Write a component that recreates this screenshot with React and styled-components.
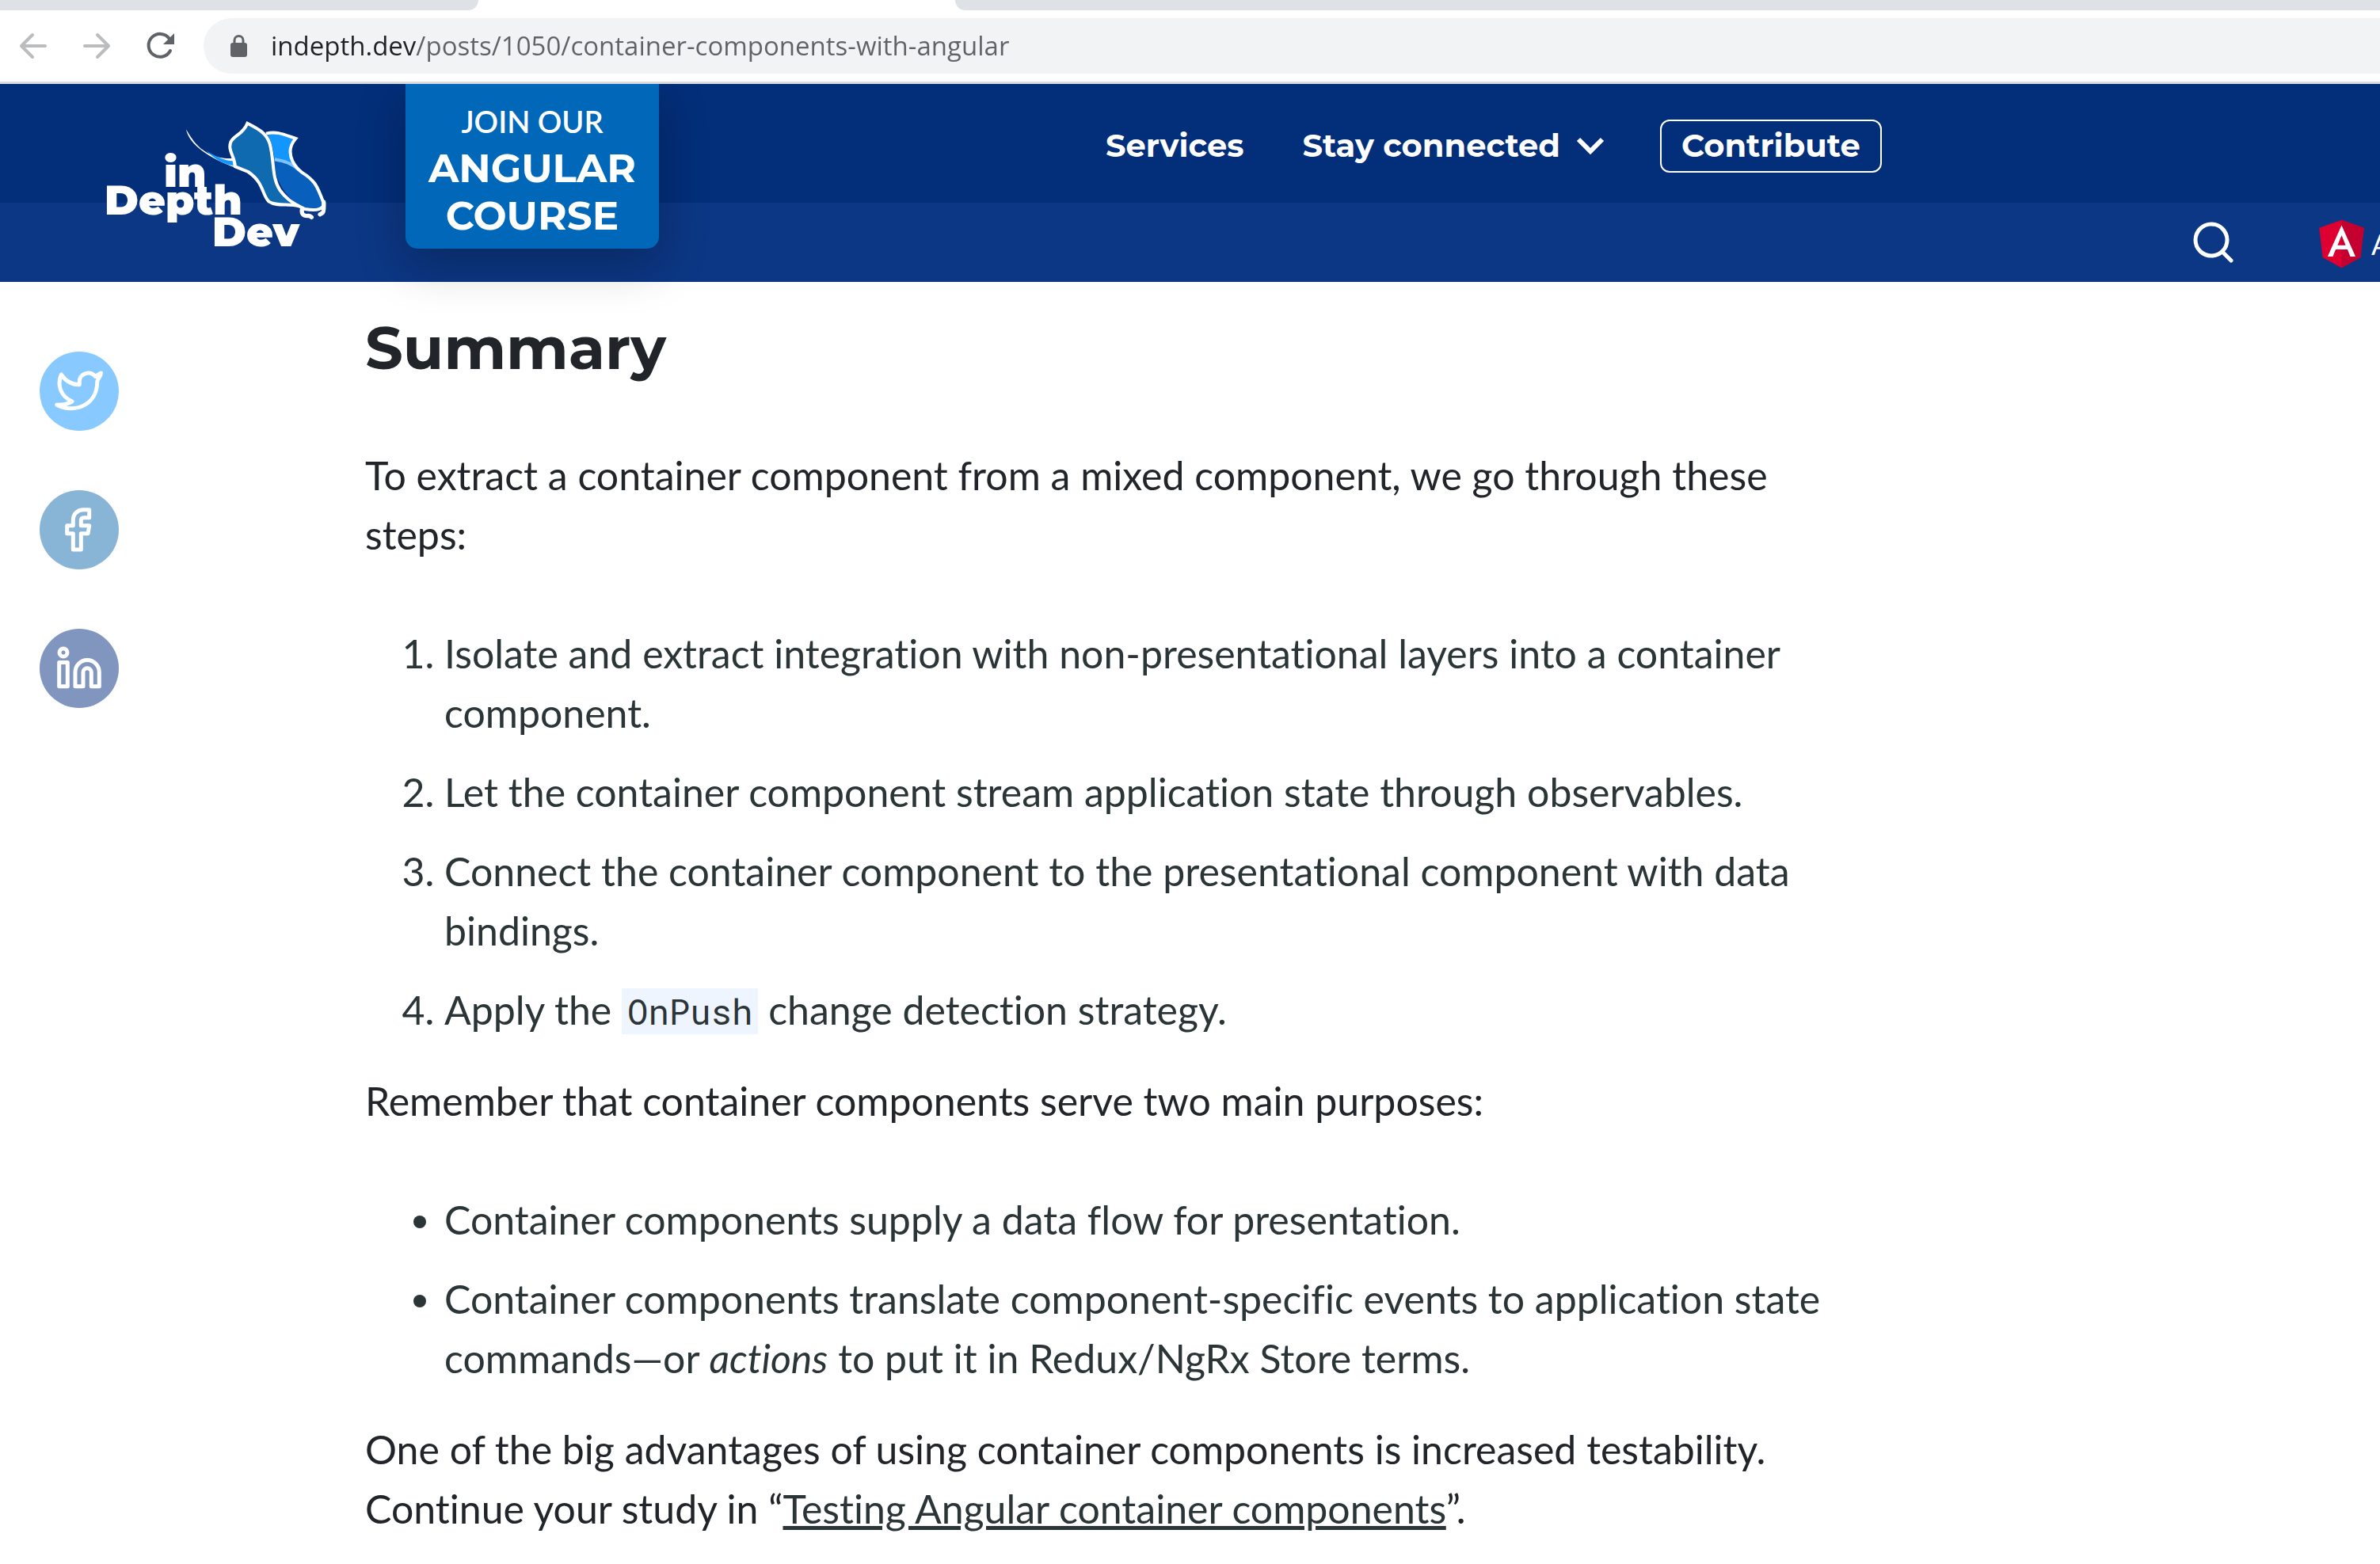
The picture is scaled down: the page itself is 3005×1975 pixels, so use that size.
import React from "react";
import styled, { createGlobalStyle } from "styled-components";

const body = `Lato, "Open Sans", sans-serif`;
const display = `Montserrat, Inter, sans-serif`;
const chrome = `"Segoe UI", "Open Sans", sans-serif`;

const GlobalStyle = createGlobalStyle`
  *, *::before, *::after { box-sizing: border-box; }
  body { margin: 0; background: #fff; color: #212529; font-family: ${body}; overflow: hidden; }
  button { border: 0; padding: 0; background: none; color: inherit; font: inherit; cursor: pointer; }
  a { color: inherit; text-decoration: none; }
  svg { display: block; flex: none; }
`;

/* Browser frame */
const TabStrip = styled.div`
  display: grid;
  grid-template-columns: 604px 602px 1fr;
  height: 13px;
  overflow: hidden;
`;
const Tab = styled.div`
  background: ${(p) => (p.$active ? "#fff" : "#dee1e6")};
  border-radius: ${(p) => (p.$side === "left" ? "0 0 16px 0" : p.$side === "right" ? "0 0 0 16px" : "0")};
`;
const Toolbar = styled.div`
  display: flex;
  align-items: center;
  padding: 10px 0 10px 22px;
  border-bottom: 3px solid #dadce0;
`;
const ToolButton = styled.button`
  width: 40px;
  height: 40px;
  margin-right: 40px;
  color: ${(p) => (p.$dim ? "#babcbe" : "#5f6368")};
`;
const AddressBar = styled.label`
  display: flex;
  align-items: center;
  flex: 1;
  height: 70px;
  padding-left: 34px;
  margin-left: -5px;
  gap: 30px;
  background: #f1f3f4;
  border-radius: 35px 0 0 35px;
`;
const Address = styled.input`
  flex: 1;
  min-width: 0;
  height: 60px;
  padding: 0;
  border: 0;
  outline: 0;
  font: 33px/60px ${chrome};
  color: #5f6368;
  background: linear-gradient(90deg, #202124 184px, #5f6368 184px);
  -webkit-background-clip: text;
  background-clip: text;
  -webkit-text-fill-color: transparent;
`;

/* Site header */
const Header = styled.header`
  display: grid;
  grid-template-columns: 382px 320px 1fr;
  grid-template-rows: 150px 100px;
  padding-left: 130px;
  background: linear-gradient(#032e79 150px, #0c3784 150px);
  color: #fff;
`;
const Brand = styled.a`
  grid-row: 1 / 3;
  padding-top: 34px;
`;
const LogoText = styled.text`
  font: 900 52px ${display};
  fill: #fff;
`;
const Course = styled.a`
  grid-row: 1 / 3;
  align-self: start;
  padding: 17px 0 11px;
  border-radius: 0 0 15px 15px;
  background: #0067b9;
  box-shadow: 0 20px 60px rgba(0, 0, 0, 0.25);
  clip-path: inset(0 -120px -120px -120px);
  text-align: center;
  font: 700 50px/60px ${display};
`;
const CourseLead = styled.span`
  display: block;
  font: 600 38px/60px ${body};
`;
const CourseLine = styled.span`
  display: block;
`;
const Nav = styled.nav`
  display: flex;
  align-items: center;
  gap: 74px;
  padding: 6px 0 0 564px;
  font: 700 40px/50px ${display};
`;
const NavButton = styled.button`
  display: flex;
  align-items: center;
  gap: 20px;
`;
const Contribute = styled.a`
  margin-left: -4px;
  padding: 6px 25px 7px;
  border: 2px solid #fff;
  border-radius: 12px;
`;
const Tools = styled.div`
  grid-column: 3;
  display: flex;
  justify-content: flex-end;
  align-items: center;
  gap: 108px;
`;
const Topic = styled.a`
  display: flex;
  align-items: center;
  gap: 9px;
  width: 77px;
  padding-top: 3px;
  overflow: hidden;
  font-size: 36px;
`;

/* Article */
const Main = styled.main`
  display: grid;
  grid-template-columns: 411px minmax(0, 1840px);
  padding: 38px 50px 0;
`;
const Share = styled.aside`
  display: flex;
  flex-direction: column;
  gap: 75px;
  padding-top: 50px;
`;
const ShareLink = styled.a`
  width: 100px;
  height: 100px;
  border-radius: 50%;
  background: ${(p) => p.$color};
`;
const Article = styled.article`
  font-size: 50px;
  line-height: 75px;
  font-variant-ligatures: no-common-ligatures;
`;
const Title = styled.h2`
  margin: 0 0 79px;
  font: 700 75px/90px ${display};
`;
const Text = styled.p`
  margin: 0 0 75px;
`;
const List = styled.ul`
  margin: 0 0 40px;
  padding-left: 100px;
  color: #2b3436;
`;
const Item = styled.li`
  & + & { margin-top: 25px; }
`;
const Code = styled.code`
  padding: 0 7px;
  background: #eef5ff;
  font: 44px "Roboto Mono", "Liberation Mono", monospace;
`;
const TextLink = styled.a`
  color: #2b3436;
  text-decoration: underline 5px;
  text-underline-offset: 3px;
`;

const Logo = () => (
  <svg width="300" height="190" viewBox="30 0 900 570" aria-hidden="true">
    <g transform="scale(3)">
      <LogoText x="87" y="96">in</LogoText>
      <LogoText x="12" y="131">Depth</LogoText>
      <LogoText x="148" y="171">Dev</LogoText>
    </g>
    <path d="M345 70C375 122 400 152 450 170C480 180 500 180 522 180L534 216C440 184 356 130 345 70Z" fill="#fff" />
    <path d="M420 150C460 175 490 188 522 190L524 208C480 200 450 180 420 150Z" fill="#1496ff" />
    <path d="M650 86C690 76 716 90 760 105C738 130 734 160 748 190C758 210 770 222 775 228C740 200 705 190 680 185C676 150 668 110 650 86Z" fill="#1496ff" />
    <path d="M680 186C715 196 745 205 776 230C820 260 835 270 866 350C868 372 840 380 795 372C730 340 675 260 680 186Z" fill="#0860bc" />
    <path d="M680 184C715 190 745 198 772 224" fill="none" stroke="#7ec3ff" strokeWidth="12" />
    <path d="M648 86C690 76 716 90 760 105C738 130 734 160 748 190C758 210 770 222 782 232C830 262 840 278 866 350C868 372 840 380 795 372L765 357" fill="none" stroke="#fff" strokeWidth="12" />
    <path d="M577 47C610 64 650 82 662 125C680 190 668 250 700 300C725 335 750 348 772 361C735 348 690 365 658 343C632 318 640 272 580 231L531 211C528 170 502 150 514 118C526 92 560 90 577 47Z" fill="#0f6ab0" stroke="#fff" strokeWidth="12" />
    <path d="M784 374Q780 398 804 398Q814 396 820 403M866 345Q868 380 862 386L852 392" fill="none" stroke="#fff" strokeWidth="16" strokeLinecap="round" strokeLinejoin="round" />
  </svg>
);

const stroke = {
  fill: "none",
  stroke: "currentColor",
  strokeWidth: 4,
  strokeLinecap: "round",
  strokeLinejoin: "round",
};

const shares = [
  {
    name: "Share on Twitter",
    color: "#88caff",
    art: <path d="M77.500 27C75 28 73 30 70.500 31.500C63 23 50 28 50.300 38V41.700C41 42 33 37 27.300 29C22 42 26 56 41 63C36 66 29 67.500 21.700 67.200C45 79 73 67 72.700 38C72.700 35 77 32 77.500 27Z" />,
  },
  {
    name: "Share on Facebook",
    color: "#88b4d6",
    art: <path d="M62.700 24.800V34.800H56Q52.300 34.800 52.300 38.600V44.800H62.700L61 54.800H52.300V75H42.300V54.800H34.700V44.800H42.300V37.500C42.300 30 48 24.800 55 24.800Z" />,
  },
  {
    name: "Share on LinkedIn",
    color: "#8196be",
    art: (
      <>
        <circle cx="30" cy="30" r="5" />
        <path d="M24.700 42.400H35.300V72.700H24.700ZM45 72.700V54.700a15.150 15.150 0 0 1 30.300 0V72.700H65.300V55a5.150 5.150 0 0 0-10.300 0V72.700Z" />
      </>
    ),
  },
];

export default function App() {
  return (
    <>
      <GlobalStyle />
      <TabStrip>
        <Tab $side="left" />
        <Tab $active />
        <Tab $side="right" />
      </TabStrip>
      <Toolbar>
        <ToolButton $dim aria-label="Back">
          <svg width="40" height="40" viewBox="0 0 40 40" {...stroke}><path d="M35 20H5M19 6L5 20L19 34" /></svg>
        </ToolButton>
        <ToolButton $dim aria-label="Forward">
          <svg width="40" height="40" viewBox="0 0 40 40" {...stroke}><path d="M5 20H35M21 6L35 20L21 34" /></svg>
        </ToolButton>
        <ToolButton aria-label="Reload">
          <svg width="40" height="40" viewBox="0 0 40 40" {...stroke}>
            <path d="M33 26A14.500 14.500 0 1 1 32 11" />
            <path d="M38 4V18H24Z" fill="currentColor" stroke="none" />
          </svg>
        </ToolButton>
        <AddressBar>
          <svg width="21" height="28" viewBox="0 0 21 28" aria-hidden="true">
            <rect y="10" width="21" height="18" rx="3" fill="#5f6368" />
            <path d="M5 11V7a5.500 5.500 0 0 1 11 0v4" fill="none" stroke="#5f6368" strokeWidth="3" />
          </svg>
          <Address aria-label="Address" defaultValue="indepth.dev/posts/1050/container-components-with-angular" />
        </AddressBar>
      </Toolbar>

      <Header>
        <Brand href="#" aria-label="inDepthDev"><Logo /></Brand>
        <Course href="#">
          <CourseLead>JOIN OUR</CourseLead>
          <CourseLine>ANGULAR</CourseLine>
          <CourseLine>COURSE</CourseLine>
        </Course>
        <Nav>
          <a href="#">Services</a>
          <NavButton>
            Stay connected
            <svg width="36" height="24" viewBox="0 0 36 24" fill="none" stroke="currentColor" strokeWidth="6"><path d="M3 4L18 19L33 4" /></svg>
          </NavButton>
          <Contribute href="#">Contribute</Contribute>
        </Nav>
        <Tools>
          <button aria-label="Search">
            <svg width="52" height="52" viewBox="0 0 52 52" {...stroke} strokeWidth="5"><circle cx="24" cy="23" r="20" /><path d="M38 38L49 49" /></svg>
          </button>
          <Topic href="#">
            <svg width="57" height="62" viewBox="31 28 188 204" aria-hidden="true">
              <path fill="#dd0031" d="M125 30L31.900 63.200l14.200 123.100L125 230l78.900-43.700 14.200-123.100z" />
              <path fill="#c3002f" d="M125 30V230l78.900-43.700 14.200-123.100z" />
              <path fill="#fff" d="M125 52.100L66.800 182.600h21.700l11.700-29.200h49.400l11.700 29.200H183zm17 83.300h-34l17-40.900z" />
            </svg>
            <span>A</span>
          </Topic>
        </Tools>
      </Header>

      <Main>
        <Share>
          {shares.map((s) => (
            <ShareLink key={s.name} href="#" aria-label={s.name} $color={s.color}>
              <svg width="100" height="100" viewBox="0 0 100 100" fill="none" stroke="#fff" strokeWidth="5" strokeLinecap="round" strokeLinejoin="round">{s.art}</svg>
            </ShareLink>
          ))}
        </Share>
        <Article>
          <Title>Summary</Title>
          <Text>To extract a container component from a mixed component, we go through these steps:</Text>
          <List as="ol">
            <Item>Isolate and extract integration with non-presentational layers into a container component.</Item>
            <Item>Let the container component stream application state through observables.</Item>
            <Item>Connect the container component to the presentational component with data bindings.</Item>
            <Item>Apply the <Code>OnPush</Code> change detection strategy.</Item>
          </List>
          <Text>Remember that container components serve two main purposes:</Text>
          <List>
            <Item>Container components supply a data flow for presentation.</Item>
            <Item>
              Container components translate component-specific events to application state commands—or <em>actions</em> to put it in Redux/NgRx Store terms.
            </Item>
          </List>
          <Text>
            One of the big advantages of using container components is increased testability. Continue your study in “<TextLink href="#">Testing Angular container components</TextLink>”.
          </Text>
        </Article>
      </Main>
    </>
  );
}
